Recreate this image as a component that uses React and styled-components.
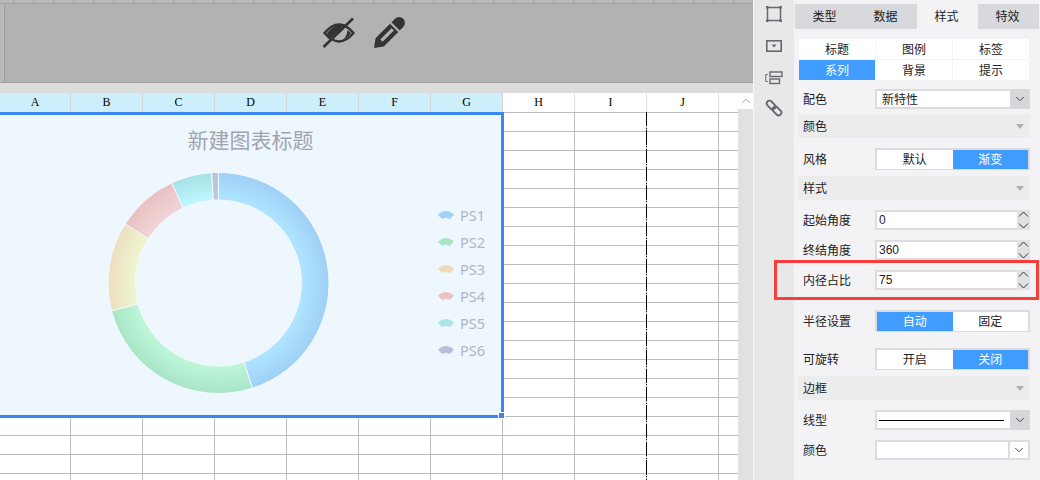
import React from "react";
import styled, { createGlobalStyle } from "styled-components";
import { ChevronDown, ChevronUp } from "lucide-react";

const COLUMNS = ["A", "B", "C", "D", "E", "F", "G", "H", "I", "J"];
const ROW_COUNT = 20;

const SLICES = [
  { id: "PS1", from: 0, to: 162.2, inner: "#aee4ff", outer: "#9fcff6", legend: "#9fd0f8" },
  { id: "PS2", from: 162.2, to: 255.5, inner: "#bdf5d9", outer: "#a8e5c5", legend: "#a8e5c5" },
  { id: "PS3", from: 255.5, to: 302.3, inner: "#f0f4ce", outer: "#ecdfc2", legend: "#ecdcb8" },
  { id: "PS4", from: 302.3, to: 334.9, inner: "#f1d3d6", outer: "#e8c1c1", legend: "#ecc2c4" },
  { id: "PS5", from: 334.9, to: 356.5, inner: "#bdf6fc", outer: "#a6e1e5", legend: "#aae4e6" },
  { id: "PS6", from: 356.5, to: 360, inner: "#bcc8de", outer: "#b9c4da", legend: "#b7c0d8" },
];

const polar = (r, deg) => {
  const a = (deg * Math.PI) / 180;
  return `${(r * Math.sin(a)).toFixed(2)} ${(-r * Math.cos(a)).toFixed(2)}`;
};

const arcPath = (from, to, r, r0) => {
  const large = to - from > 180 ? 1 : 0;
  return `M${polar(r, from)} A${r} ${r} 0 ${large} 1 ${polar(r, to)} L${polar(r0, to)} A${r0} ${r0} 0 ${large} 0 ${polar(r0, from)} Z`;
};

const GlobalStyle = createGlobalStyle`
  html, body {
    margin: 0;
    padding: 0;
    background: #fff;
  }
  body {
    font-family: "Liberation Sans", "Noto Sans CJK SC", sans-serif;
    font-size: 12px;
  }
`;

const Page = styled.div`
  display: flex;
  width: 1040px;
  height: 480px;
  overflow: hidden;
`;

const Workspace = styled.div`
  display: flex;
  flex-direction: column;
  flex: 0 0 753px;
`;

const TopPanel = styled.div`
  display: flex;
  flex-direction: column;
  flex: 0 0 83px;
  background: #b2b2b2;
  border-bottom: 1px solid #9c9c9c;
  box-sizing: border-box;
`;

const Ruler = styled.div`
  flex: 0 0 4px;
  box-sizing: border-box;
  border-bottom: 1px solid #a0a0a0;
  background: repeating-linear-gradient(90deg, #b9b9b9 0 13px, #a4a4a4 13px 14px, #b9b9b9 14px 20px);
`;

const TopBody = styled.div`
  display: flex;
  flex: 1;
  gap: 17px;
  padding: 13px 0 0 318px;
  border-left: 4px solid #b9b9b9;
  box-shadow: inset 1px 0 0 #a0a0a0;
`;

const Strip = styled.div`
  flex: 0 0 10px;
  background: #dcdcdc;
`;

const SheetArea = styled.div`
  display: flex;
  flex: 1;
  min-height: 0;
`;

const Sheet = styled.div`
  position: relative;
  flex: 0 0 738px;
  overflow: hidden;
`;

const HeaderRow = styled.div`
  display: flex;
  height: 19px;
`;

const HeaderCell = styled.div`
  display: flex;
  align-items: center;
  justify-content: center;
  box-sizing: border-box;
  flex: 0 0 ${(p) => (p.$first ? 71 : 72)}px;
  border-right: 1px solid ${(p) => (p.$selected ? "#d6d6d6" : "#dedede")};
  background: ${(p) => (p.$selected ? "#cdeffc" : "#fff")};
  font-family: "Liberation Serif", serif;
  font-size: 12px;
  color: #000;
`;

const HeaderFiller = styled.div`
  flex: 1;
`;

const GridRow = styled.div`
  display: flex;
  height: 19px;
`;

const GridCell = styled.div`
  box-sizing: border-box;
  flex: 0 0 ${(p) => (p.$first ? 71 : 72)}px;
  border-top: 1px solid #bbb;
  border-right: 1px solid #bbb;
`;

const GridFiller = styled.div`
  flex: 1;
  border-top: 1px solid #bbb;
`;

const PageBreak = styled.div`
  position: absolute;
  left: 646px;
  top: 19px;
  bottom: 0;
  width: 1px;
  background: repeating-linear-gradient(
    180deg,
    #000 0 14.3px,
    transparent 14.3px 15.6px,
    #000 15.6px 16.6px,
    transparent 16.6px 18.33px
  );
`;

const Chart = styled.div`
  position: absolute;
  left: -3px;
  top: 19px;
  width: 507px;
  height: 306px;
  box-sizing: border-box;
  border: 3px solid #3b87ef;
  background: #eef6fe;
  display: flex;
  flex-direction: column;
`;

const Handle = styled.div`
  position: absolute;
  right: -4px;
  bottom: -4px;
  width: 5px;
  height: 5px;
  background: #3b87ef;
  border: 1px solid #fff;
`;

const ChartTitle = styled.div`
  padding: 10px 0 2px;
  line-height: 28px;
  text-align: center;
  font-family: "Noto Sans CJK SC", sans-serif;
  font-size: 21px;
  color: #a1a6ac;
`;

const ChartBody = styled.div`
  display: flex;
  align-items: flex-start;
  padding: 16px 0 0 106px;
`;

const Legend = styled.div`
  display: flex;
  flex-direction: column;
  margin: 30px 0 0 107px;
`;

const LegendItem = styled.div`
  display: flex;
  align-items: center;
  gap: 5px;
  height: 27px;
  font-family: "Noto Sans", sans-serif;
  font-size: 14.5px;
  color: #b1b6bd;
`;

const Scrollbar = styled.div`
  display: flex;
  flex-direction: column;
  flex: 1;
  background: #e1e1e1;
`;

const ScrollButton = styled.div`
  display: flex;
  align-items: center;
  justify-content: center;
  height: 16px;
  background: #fff;
  color: #8a8a8a;
`;

const Rail = styled.div`
  display: flex;
  flex-direction: column;
  align-items: center;
  flex: 0 0 41px;
  box-sizing: border-box;
  border-left: 1px solid #f6f6f6;
  background: #e8e8e8;
  padding-top: 5px;
`;

const RailIcon = styled.svg`
  display: block;
  width: 18px;
  height: 18px;
  margin-bottom: ${(p) => p.$gap}px;
  color: #666a70;
`;

const Panel = styled.div`
  flex: 1;
  display: flex;
  flex-direction: column;
  background: #f3f3f5;
  color: #222;
  font-family: "Noto Sans CJK SC", sans-serif;
  font-size: 12px;
`;

const Tabs = styled.div`
  display: grid;
  grid-template-columns: repeat(4, 61px);
  height: 25px;
  margin: 4px 0 0 1px;
`;

const Tab = styled.div`
  display: flex;
  align-items: center;
  justify-content: center;
  padding: 0 2px 2px 0;
  background: ${(p) => (p.$active ? "#f3f3f5" : "#d8d9dd")};
`;

const PanelBody = styled.div`
  display: flex;
  flex-direction: column;
  padding: 0 10px 0 4px;
`;

const SubTabs = styled.div`
  display: grid;
  grid-template-columns: repeat(3, 76px);
  grid-auto-rows: 20px;
  gap: 1px;
  margin: 10px 1px 0;
`;

const SubTab = styled.div`
  display: flex;
  align-items: center;
  justify-content: center;
  padding-bottom: 2px;
  background: ${(p) => (p.$active ? "#409cff" : "#fff")};
  color: ${(p) => (p.$active ? "#fff" : "#222")};
`;

const Row = styled.div`
  position: relative;
  display: flex;
  align-items: center;
  height: ${(p) => p.$height || 20}px;
  margin-top: ${(p) => p.$top}px;
`;

const Label = styled.div`
  flex: 0 0 77px;
  box-sizing: border-box;
  padding: 0 0 2px 5px;
`;

const Section = styled.div`
  display: flex;
  align-items: center;
  justify-content: space-between;
  box-sizing: border-box;
  height: 24px;
  margin-top: ${(p) => p.$top}px;
  padding: 0 6px 2px 5px;
  background: #ececec;
`;

const Caret = styled.span`
  width: 0;
  height: 0;
  margin-top: 2px;
  border-left: 4px solid transparent;
  border-right: 4px solid transparent;
  border-top: 5px solid #b0b0b0;
`;

const Field = styled.div`
  flex: 1;
  align-self: stretch;
  display: flex;
  align-items: stretch;
  box-sizing: border-box;
  border: 2px solid #dcdcdf;
  background: #fff;
`;

const FieldText = styled.div`
  flex: 1;
  display: flex;
  align-items: center;
  padding-left: ${(p) => p.$pad || 5}px;
  padding-bottom: ${(p) => (p.$cjk ? 2 : 0)}px;
  font-family: "Liberation Sans", "Noto Sans CJK SC", sans-serif;
  color: #222;
`;

const DropButton = styled.div`
  display: flex;
  align-items: center;
  justify-content: center;
  flex: 0 0 ${(p) => (p.$plain ? 18 : 20)}px;
  margin: ${(p) => (p.$plain ? 0 : "-2px -2px -2px 0")};
  background: ${(p) => (p.$plain ? "#fff" : "#d6d7da")};
  border-left: ${(p) => (p.$plain ? "2px solid #dcdcdf" : "none")};
  color: #333;
`;

const Stepper = styled.div`
  display: flex;
  flex-direction: column;
  flex: 0 0 13px;
  margin: -2px -2px -2px 0;
  background: #e0e1e3;
  color: #333;
  align-items: center;
  justify-content: center;
  gap: 6px;
`;

const LineSample = styled.div`
  flex: 1;
  align-self: center;
  height: 1px;
  margin: 0 6px 0 2px;
  background: #000;
`;

const Toggle = styled.div`
  flex: 1;
  align-self: stretch;
  display: grid;
  grid-template-columns: 1fr 1fr;
  box-sizing: border-box;
  border: 2px solid #dcdcdf;
  background: #fff;
`;

const ToggleOption = styled.div`
  display: flex;
  align-items: center;
  justify-content: center;
  padding-bottom: 2px;
  background: ${(p) => (p.$active ? "#409cff" : "#fff")};
  color: ${(p) => (p.$active ? "#fff" : "#222")};
`;

const Highlight = styled.div`
  position: absolute;
  left: -24px;
  right: -9px;
  top: -10px;
  bottom: -10px;
  border: 3px solid #f93c3c;
  pointer-events: none;
`;

const EyeOffIcon = () => (
  <svg width="34" height="32" viewBox="0 0 34 32" fill="none">
    <path d="M5 16 Q12 7 23 7 L8 24 Q5 20 5 16 Z" fill="#333" />
    <path d="M17 25 Q25 22 25.5 13 L29 16 Q24 23 17 25 Z" fill="#333" />
    <path d="M5 27 L33 3" stroke="#b2b2b2" strokeWidth="4" />
    <path d="M2.5 16 Q17 -1 31.5 16 Q17 33 2.5 16 Z" stroke="#333" strokeWidth="2.4" />
    <path d="M1.5 30 L31 1.5" stroke="#333" strokeWidth="2.6" />
  </svg>
);

const PencilIcon = () => (
  <svg width="33" height="32" viewBox="0 0 33 32">
    <g transform="translate(1 31) rotate(45)" fill="#333">
      <path
        fillRule="evenodd"
        d="M0 0 L-5.8 -8 V-28.5 H5.8 V-8 Z M-1.6 -10.5 V-26.5 H1.6 V-10.5 Z"
      />
      <path d="M-5.8 -30.5 V-35.5 A5.8 5.8 0 0 1 5.8 -35.5 V-30.5 Z" />
    </g>
  </svg>
);

const DonutChart = () => (
  <svg width="224" height="224" viewBox="-112.5 -112 224 224">
    <defs>
      {SLICES.map((s) => (
        <radialGradient key={s.id} id={`grad-${s.id}`} gradientUnits="userSpaceOnUse" cx="0" cy="0" r="110.5">
          <stop offset="0.77" stopColor={s.inner} />
          <stop offset="1" stopColor={s.outer} />
        </radialGradient>
      ))}
    </defs>
    {SLICES.map((s) => (
      <path
        key={s.id}
        d={arcPath(s.from, s.to, 110.5, 83)}
        fill={`url(#grad-${s.id})`}
        stroke="#f6fbff"
        strokeWidth="0.9"
      />
    ))}
  </svg>
);

const LegendMark = ({ color }) => (
  <svg width="18" height="10" viewBox="0 0 18 10">
    <path d="M1.5 4.5 Q9 -1.5 16.5 4.5 L13 8.5 Q9 6 5 8.5 Z" fill={color} stroke={color} strokeLinejoin="round" />
  </svg>
);

const StepChevron = ({ up }) => (
  <svg width="11" height="6" viewBox="0 0 11 6" fill="none" stroke="currentColor" strokeWidth="1">
    <path d={up ? "M1 5.5 L5.5 1 L10 5.5" : "M1 0.5 L5.5 5 L10 0.5"} />
  </svg>
);

const ChartPanel = () => (
  <Chart>
    <ChartTitle>新建图表标题</ChartTitle>
    <ChartBody>
      <DonutChart />
      <Legend>
        {SLICES.map((s) => (
          <LegendItem key={s.id}>
            <LegendMark color={s.legend} />
            {s.id}
          </LegendItem>
        ))}
      </Legend>
    </ChartBody>
    <Handle />
  </Chart>
);

const SelectField = ({ value, line, plain }) => (
  <Field>
    {line ? <LineSample /> : <FieldText $pad={5} $cjk>{value}</FieldText>}
    <DropButton $plain={plain}>
      <ChevronDown size={14} strokeWidth={1.5} />
    </DropButton>
  </Field>
);

const NumberField = ({ value }) => (
  <Field>
    <FieldText $pad={2}>{value}</FieldText>
    <Stepper>
      <StepChevron up />
      <StepChevron />
    </Stepper>
  </Field>
);

const ToggleField = ({ options, active }) => (
  <Toggle>
    {options.map((o) => (
      <ToggleOption key={o} $active={o === active}>
        {o}
      </ToggleOption>
    ))}
  </Toggle>
);

const App = () => (
  <>
    <GlobalStyle />
    <Page>
      <Workspace>
        <TopPanel>
          <Ruler />
          <TopBody>
            <EyeOffIcon />
            <PencilIcon />
          </TopBody>
        </TopPanel>
        <Strip />
        <SheetArea>
          <Sheet>
            <HeaderRow>
              {COLUMNS.map((c, i) => (
                <HeaderCell key={c} $first={i === 0} $selected={i < 7}>
                  {c}
                </HeaderCell>
              ))}
              <HeaderFiller />
            </HeaderRow>
            {Array.from({ length: ROW_COUNT }, (_, r) => (
              <GridRow key={r}>
                {COLUMNS.map((c, i) => (
                  <GridCell key={c} $first={i === 0} />
                ))}
                <GridFiller />
              </GridRow>
            ))}
            <PageBreak />
            <ChartPanel />
          </Sheet>
          <Scrollbar>
            <ScrollButton>
              <ChevronUp size={14} strokeWidth={1.3} />
            </ScrollButton>
          </Scrollbar>
        </SheetArea>
      </Workspace>

      <Rail>
        <RailIcon $gap={14} viewBox="0 0 18 18" fill="none" stroke="currentColor" strokeWidth="1.5">
          <rect x="2.5" y="2.5" width="13" height="13" />
          <rect x="1" y="1" width="2.5" height="2.5" fill="currentColor" strokeWidth="0" />
          <rect x="14.5" y="1" width="2.5" height="2.5" fill="currentColor" strokeWidth="0" />
          <rect x="1" y="14.5" width="2.5" height="2.5" fill="currentColor" strokeWidth="0" />
          <rect x="14.5" y="14.5" width="2.5" height="2.5" fill="currentColor" strokeWidth="0" />
        </RailIcon>
        <RailIcon $gap={14} viewBox="0 0 18 18" fill="none" stroke="currentColor" strokeWidth="1.6">
          <rect x="1.8" y="3.8" width="14.4" height="10.4" />
          <path d="M6.5 7.5 H11.5 L9 10.5 Z" fill="currentColor" strokeWidth="0" />
        </RailIcon>
        <RailIcon $gap={12} viewBox="0 0 18 18" fill="none" stroke="currentColor" strokeWidth="1.4">
          <rect x="5" y="3" width="12" height="4.5" />
          <rect x="5" y="10" width="9.5" height="4.5" />
          <path d="M2.8 5.5 H0.8 V12.5 H2.8" strokeWidth="1" />
        </RailIcon>
        <RailIcon $gap={0} viewBox="0 0 18 18" fill="none" stroke="currentColor" strokeWidth="1.9">
          <rect x="1" y="3.2" width="10" height="5.6" rx="2.8" transform="rotate(45 6 6)" />
          <rect x="7" y="9.2" width="10" height="5.6" rx="2.8" transform="rotate(45 12 12)" />
        </RailIcon>
      </Rail>

      <Panel>
        <Tabs>
          <Tab>类型</Tab>
          <Tab>数据</Tab>
          <Tab $active>样式</Tab>
          <Tab>特效</Tab>
        </Tabs>
        <PanelBody>
          <SubTabs>
            <SubTab>标题</SubTab>
            <SubTab>图例</SubTab>
            <SubTab>标签</SubTab>
            <SubTab $active>系列</SubTab>
            <SubTab>背景</SubTab>
            <SubTab>提示</SubTab>
          </SubTabs>
          <Row $top={9}>
            <Label>配色</Label>
            <SelectField value="新特性" />
          </Row>
          <Section $top={5}>
            颜色
            <Caret />
          </Section>
          <Row $top={10} $height={22}>
            <Label>风格</Label>
            <ToggleField options={["默认", "渐变"]} active="渐变" />
          </Row>
          <Section $top={6}>
            样式
            <Caret />
          </Section>
          <Row $top={10}>
            <Label>起始角度</Label>
            <NumberField value="0" />
          </Row>
          <Row $top={10}>
            <Label>终结角度</Label>
            <NumberField value="360" />
          </Row>
          <Row $top={10}>
            <Label>内径占比</Label>
            <NumberField value="75" />
            <Highlight />
          </Row>
          <Row $top={20} $height={22}>
            <Label>半径设置</Label>
            <ToggleField options={["自动", "固定"]} active="自动" />
          </Row>
          <Row $top={16} $height={22}>
            <Label>可旋转</Label>
            <ToggleField options={["开启", "关闭"]} active="关闭" />
          </Row>
          <Section $top={6}>
            边框
            <Caret />
          </Section>
          <Row $top={10}>
            <Label>线型</Label>
            <SelectField line />
          </Row>
          <Row $top={10}>
            <Label>颜色</Label>
            <SelectField plain />
          </Row>
        </PanelBody>
      </Panel>
    </Page>
  </>
);

export default App;
